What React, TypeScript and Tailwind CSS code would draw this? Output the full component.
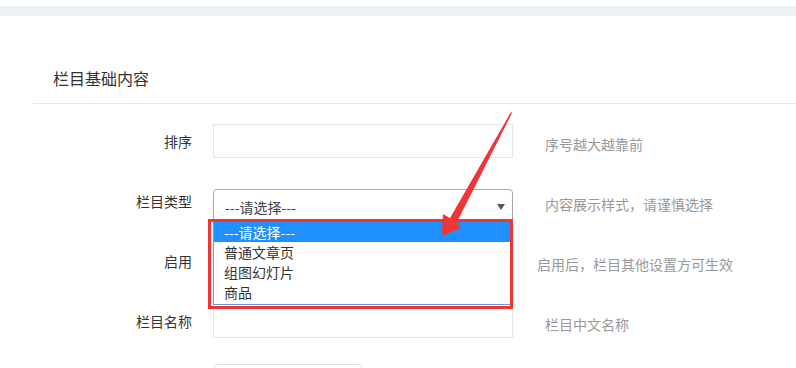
import React from "react";

const helpCls = "text-[14px] leading-[20px] text-[#999]";
const labelCls = "w-[192px] shrink-0 text-right text-[14px] leading-[20px] text-[#333]";

export default function App() {
	const options = ["---请选择---", "普通文章页", "组图幻灯片", "商品"];

	return (
		<div className="relative w-[796px] h-[368px] overflow-hidden bg-white font-['Noto_Sans_CJK_SC','Noto_Sans',sans-serif]">
			<div className="h-[6px]" />
			<div className="h-[10px] bg-[#eef1f3]" />

			<div className="ml-[33px] h-[88px] border-b border-[#e8e8e8] pl-[20px] pt-[50px]">
				<div className="text-[16px] leading-[24px] text-[#333]">栏目基础内容</div>
			</div>

			{/* 排序 */}
			<div className="mt-[20px] flex">
				<div className={`${labelCls} pt-[7px]`}>排序</div>
				<div className="ml-[21px] h-[34px] w-[300px] border border-[#e5e5e5]" />
				<div className={`${helpCls} ml-[32px] pt-[10px]`}>序号越大越靠前</div>
			</div>

			{/* 栏目类型 */}
			<div className="mt-[31px] flex">
				<div className={`${labelCls} pt-[2px]`}>栏目类型</div>
				<div className="ml-[21px] flex h-[34px] w-[300px] items-center justify-between rounded-[4px] border border-[#a9a9a9] pl-[11px] pr-[7px] pt-[2px]">
					<span className="text-[14px] text-[#444]">---请选择---</span>
					<svg width="8" height="6" viewBox="0 0 8 6">
						<path d="M0 0h8L4 6z" fill="#555" />
					</svg>
				</div>
				<div className={`${helpCls} ml-[32px] pt-[5px]`}>内容展示样式，请谨慎选择</div>
			</div>

			{/* 启用 */}
			<div className="mt-[22px] flex h-[34px]">
				<div className={`${labelCls} pt-[6px]`}>启用</div>
				<div className="ml-[21px] w-[300px]" />
				<div className={`${helpCls} ml-[24px] pt-[9px]`}>启用后，栏目其他设置方可生效</div>
			</div>

			{/* 栏目名称 */}
			<div className="mt-[25px] flex">
				<div className={`${labelCls} pt-[7px]`}>栏目名称</div>
				<div className="ml-[21px] h-[34px] w-[300px] border border-[#e5e5e5]" />
				<div className={`${helpCls} ml-[32px] pt-[10px]`}>栏目中文名称</div>
			</div>

			<div className="mt-[26px] flex">
				<div className="w-[192px] shrink-0" />
				<div className="ml-[21px] h-[34px] w-[150px] rounded-[4px] border border-[#e0e0e0]" />
			</div>

			{/* open select list */}
			<div className="absolute left-[213px] top-[221px] h-[84px] w-[299px] border border-[#6f9ad8] bg-white">
				{options.map((o, i) => (
					<div
						key={o}
						className={`h-[20px] pl-[10px] text-[14px] leading-[20px] ${i === 0 ? "bg-[#1e90ff] text-white" : "text-[#333]"}`}
					>
						{o}
					</div>
				))}
			</div>

			{/* annotation */}
			<div className="absolute left-[208px] top-[219px] h-[90px] w-[305px] border-[3px] border-[#ef3535]" />
			<svg className="pointer-events-none absolute left-0 top-0" width="796" height="368">
				<polygon points="512,113 457,222 461,228 442,236 443,214 450,218 511,112" fill="#ef3535" />
			</svg>
		</div>
	);
}
